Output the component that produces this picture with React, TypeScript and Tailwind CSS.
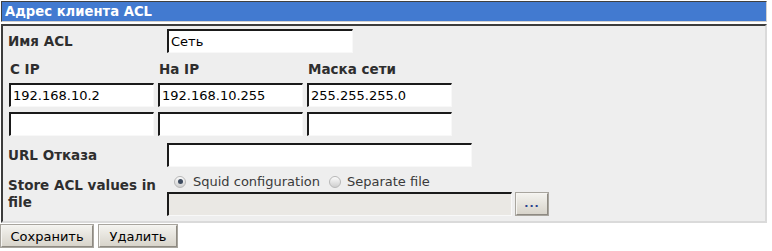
import { ReactNode } from 'react'

// Поле ввода в стиле GTK (вдавленная рамка)
function Field({ value = '', w, disabled = false }: { value?: string; w: string; disabled?: boolean }) {
  return (
    <div
      className={`${w} h-[24px] flex items-center border-t-2 border-l-2 border-b border-r border-t-[#1a1a1a] border-l-[#1a1a1a] border-b-[#f8f8f8] border-r-[#f8f8f8] px-[2px] text-[13px] text-black ${
        disabled ? 'bg-[#eae8e4]' : 'bg-white'
      }`}
    >
      {value}
    </div>
  )
}

function Radio({ checked }: { checked?: boolean }) {
  return (
    <span className="w-[12px] h-[12px] rounded-full border border-[#b8b8b8] bg-gradient-to-b from-[#fbfbfb] to-[#cfcfcf] flex items-center justify-center">
      {checked && <span className="w-[5px] h-[5px] rounded-full bg-[#3c4a5e]" />}
    </span>
  )
}

function Btn({ children, w }: { children: ReactNode; w: string }) {
  return (
    <button className={`${w} h-[22px] border border-t-[#f6f5f2] border-l-[#f6f5f2] border-r-[#8e8a82] border-b-[#8e8a82] outline outline-1 outline-[#a8a59e] bg-gradient-to-b from-[#f3f2ee] to-[#d8d4cb] text-[13px] text-black leading-none flex items-center justify-center`}>
      {children}
    </button>
  )
}

export default function App() {
  return (
    <div className="w-[772px] h-[251px] bg-white font-['DejaVu_Sans',sans-serif] text-[13px]">
      <div className="pl-[1px] pt-[1px] w-[767px]">
        {/* Заголовок */}
        <div className="h-[21px] bg-[#427ad0] border-t border-l border-t-[#404040] border-l-[#404040] border-r border-b border-r-[#d0d0d0] border-b-[#d0d0d0] text-white font-bold pl-[3px] leading-[19px] text-[13.2px]">
          Адрес клиента ACL
        </div>

        {/* Панель формы */}
        <div className="mt-[2px] h-[199px] bg-[#eeeeee] border-t-2 border-l-2 border-t-[#3c3c3c] border-l-[#3c3c3c] border-r-2 border-b-2 border-r-[#dadada] border-b-[#dadada] text-[#2e2e2e]">
          <div className="flex items-center pt-[3px]">
            <div className="w-[164px] pl-[5px] font-bold text-[13.5px]">Имя ACL</div>
            <Field value="Сеть" w="w-[186px]" />
          </div>

          <div className="flex pl-[6px] mt-[6px] gap-[4px] font-bold h-[20px] items-center text-[13.5px]">
            <div className="w-[145px] pl-[1px]">С IP</div>
            <div className="w-[145px] pl-[1px]">На IP</div>
            <div className="w-[145px] pl-[1px]">Маска сети</div>
          </div>
          <div className="flex pl-[6px] mt-[4px] gap-[4px]">
            <Field value="192.168.10.2" w="w-[145px]" />
            <Field value="192.168.10.255" w="w-[145px]" />
            <Field value="255.255.255.0" w="w-[145px]" />
          </div>
          <div className="flex pl-[6px] mt-[5px] gap-[4px]">
            <Field w="w-[145px]" />
            <Field w="w-[145px]" />
            <Field w="w-[145px]" />
          </div>

          <div className="flex items-center mt-[7px]">
            <div className="w-[164px] pl-[5px] font-bold text-[13.5px]">URL Отказа</div>
            <Field w="w-[305px]" />
          </div>

          <div className="flex mt-[5px]">
            <div className="w-[164px] pl-[5px] pt-[5px] font-bold leading-[17px] text-[13.5px]">
              Store ACL values in file
            </div>
            <div className="flex flex-col">
              <div className="flex items-center h-[19px] pl-[7px] text-[#3a3a3a]">
                <Radio checked />
                <span className="ml-[7px]">Squid configuration</span>
                <span className="ml-[9px]"><Radio /></span>
                <span className="ml-[6px]">Separate file</span>
              </div>
              <div className="flex items-center mt-[1px]">
                <Field w="w-[345px]" disabled />
                <div className="ml-[4px]">
                  <Btn w="w-[32px]">
                    <span className="text-[#2a3f8f] text-[11px] font-bold tracking-[1px] pb-[1px]">...</span>
                  </Btn>
                </div>
              </div>
            </div>
          </div>
        </div>
      </div>

      {/* Кнопки */}
      <div className="flex gap-[6px] mt-[2px] pl-[1px]">
        <Btn w="w-[92px]">Сохранить</Btn>
        <Btn w="w-[78px]">Удалить</Btn>
      </div>
    </div>
  )
}
